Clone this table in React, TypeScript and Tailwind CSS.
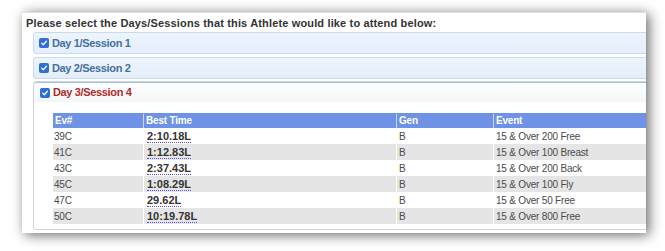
import React from "react";

type Row = { ev: string; time: string; gen: string; event: string };

const rows: Row[] = [
  { ev: "39C", time: "2:10.18L", gen: "B", event: "15 & Over 200 Free" },
  { ev: "41C", time: "1:12.83L", gen: "B", event: "15 & Over 100 Breast" },
  { ev: "43C", time: "2:37.43L", gen: "B", event: "15 & Over 200 Back" },
  { ev: "45C", time: "1:08.29L", gen: "B", event: "15 & Over 100 Fly" },
  { ev: "47C", time: "29.62L", gen: "B", event: "15 & Over 50 Free" },
  { ev: "50C", time: "10:19.78L", gen: "B", event: "15 & Over 800 Free" },
];

function Check() {
  return (
    <span className="flex h-[10px] w-[10px] shrink-0 items-center justify-center rounded-[2px] bg-[#2f6ddb]">
      <svg viewBox="0 0 10 10" className="h-[8px] w-[8px]">
        <path d="M2 5.2 L4.1 7.2 L8 2.8" fill="none" stroke="#fff" strokeWidth="1.6" strokeLinecap="round" strokeLinejoin="round" />
      </svg>
    </span>
  );
}

function SessionHeader({ label, open }: { label: string; open?: boolean }) {
  return (
    <div
      className={
        open
          ? "flex h-[20px] items-center gap-[3px] rounded-t-[3px] border-t border-[#9cc3ea] bg-gradient-to-b from-white to-[#f4f7f8] pl-[6px]"
          : "flex h-[22px] items-center gap-[3px] rounded-[3px] border border-[#c6dbf0] bg-gradient-to-b from-[#edf4fc] to-[#e4eefa] pl-[5px]"
      }
    >
      <Check />
      <span
        className={
          "text-[11px] font-bold tracking-[-0.35px] " + (open ? "text-[#b42a27]" : "text-[#44709f]")
        }
      >
        {label}
      </span>
    </div>
  );
}

export default function App() {
  return (
    <div className="h-[251px] w-[665px] overflow-hidden bg-white pt-[12px] pl-[22px] font-['Liberation_Sans',Arial,sans-serif]">
      <div className="h-[221px] w-[624px] overflow-hidden border-t border-[#e2e2e2] bg-white shadow-[3px_2px_12px_rgba(0,0,0,0.6)]">
        <div className="pt-[3px] pl-[4px] text-[11px] leading-[14px] font-bold tracking-[0.15px] text-[#333]">
          Please select the Days/Sessions that this Athlete would like to attend below:
        </div>
        <div className="mt-[2px] ml-[11px] flex w-[640px] flex-col">
          <SessionHeader label="Day 1/Session 1" />
          <div className="mt-[3px]">
            <SessionHeader label="Day 2/Session 2" />
          </div>
          <div className="mt-[2px] rounded-[3px] border border-[#cfd6d8] bg-white">
            <SessionHeader label="Day 3/Session 4" open />
            <div className="pt-[11px] pb-[5px] pl-[19px]">
              <div className="w-[620px] text-[10px] tracking-[-0.2px] text-[#4a4a4a]">
                <div className="flex h-[15px] items-center bg-[#6d92e6] font-bold text-white">
                  <div className="w-[90px] pl-[2px]">Ev#</div>
                  <div className="w-[253px] border-l border-[#c9d7f6] pl-[2px] leading-[14px]">Best Time</div>
                  <div className="w-[97px] border-l border-[#c9d7f6] pl-[2px] leading-[14px]">Gen</div>
                  <div className="flex-1 border-l border-[#c9d7f6] pl-[2px] leading-[14px]">Event</div>
                </div>
                {rows.map((r, i) => (
                  <div
                    key={r.ev}
                    className={"flex h-[16px] items-center " + (i % 2 === 1 ? "bg-[#e5e5e5]" : "bg-white")}
                  >
                    <div className="w-[90px] pl-[1px]">{r.ev}</div>
                    <div className="flex h-full w-[253px] items-center border-l border-white pl-[3px]">
                      <span className="border-b border-dotted border-[#4f4fe8] text-[11px] leading-[12px] font-bold tracking-[0px] text-[#333]">
                        {r.time}
                      </span>
                    </div>
                    <div className="flex h-full w-[97px] items-center border-l border-white pl-[2px]">{r.gen}</div>
                    <div className="flex h-full flex-1 items-center border-l border-white pl-[2px]">{r.event}</div>
                  </div>
                ))}
              </div>
            </div>
          </div>
        </div>
      </div>
    </div>
  );
}
